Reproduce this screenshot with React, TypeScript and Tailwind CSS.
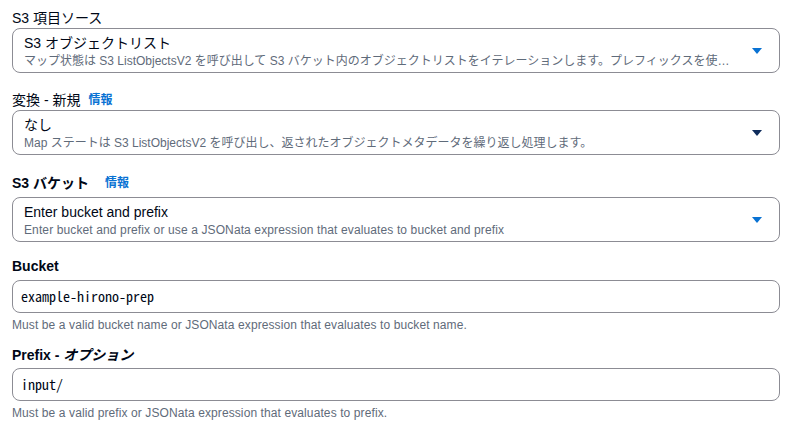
import React from 'react';

const FONT = "font-['Liberation_Sans','Noto_Sans_CJK_JP',sans-serif]";

const Caret = ({ dark }: { dark?: boolean }) => (
  <svg width="12" height="8" viewBox="0 0 12 8" className="shrink-0">
    <path d="M1 1h10L6 7z" fill={dark ? '#0f2c5c' : '#0972d3'} />
  </svg>
);

const InfoLink = () => (
  <span className="text-[12px] font-bold text-[#0972d3]">情報</span>
);

interface SelectProps {
  title: string;
  description: string;
  dark?: boolean;
  latin?: boolean;
}

const SelectBox = ({ title, description, dark, latin }: SelectProps) => (
  <div className="flex h-[45px] items-center rounded-[8px] border border-[#8c8c94] bg-white pr-[16px] pl-[11px]">
    <div className="flex min-w-0 flex-1 flex-col pr-[20px]">
      <span className="text-[14px] leading-[20px] text-[#000716]">{title}</span>
      <span
        className={`truncate text-[12px] leading-[16px] text-[#5f6b7a] ${latin ? 'tracking-[0.12px]' : ''}`}>
        {description}
      </span>
    </div>
    <Caret dark={dark} />
  </div>
);

const TextInput = ({ value }: { value: string }) => (
  <div className="flex h-[33px] items-center rounded-[8px] border border-[#8c8c94] bg-white px-[8px]">
    <span className="font-['Noto_Sans_Mono_CJK_JP','Liberation_Mono',monospace] text-[14px] text-[#000716]">
      {value}
    </span>
  </div>
);

export default function App() {
  return (
    <div className={`${FONT} min-h-[428px] w-[790px] bg-white pt-[8px] pr-[10px] pl-[12px]`}>
      {/* S3 項目ソース */}
      <div className="flex flex-col">
        <label className="text-[14px] leading-[20px] text-[#000716]">S3 項目ソース</label>
        <SelectBox
          title="S3 オブジェクトリスト"
          description="マップ状態は S3 ListObjectsV2 を呼び出して S3 バケット内のオブジェクトリストをイテレーションします。プレフィックスを使用してオブジェクトリストをフィルタリングできます。"
        />
      </div>

      {/* 変換 - 新規 */}
      <div className="mt-[17px] flex flex-col">
        <label className="flex items-center gap-[8px] text-[14px] leading-[20px] text-[#000716]">
          変換 - 新規 <InfoLink />
        </label>
        <SelectBox
          dark
          title="なし"
          description="Map ステートは S3 ListObjectsV2 を呼び出し、返されたオブジェクトメタデータを繰り返し処理します。"
        />
      </div>

      {/* S3 バケット */}
      <div className="mt-[18px] flex flex-col gap-[4px]">
        <label className="flex items-center gap-[16px] text-[14px] leading-[20px] font-bold text-[#000716]">
          S3 バケット <InfoLink />
        </label>
        <SelectBox
          latin
          title="Enter bucket and prefix"
          description="Enter bucket and prefix or use a JSONata expression that evaluates to bucket and prefix"
        />
      </div>

      {/* Bucket */}
      <div className="mt-[14px] flex flex-col gap-[4px]">
        <label className="text-[14px] leading-[20px] font-bold text-[#000716]">Bucket</label>
        <TextInput value="example-hirono-prep" />
        <span className="text-[12px] leading-[16px] tracking-[0.1px] text-[#5f6b7a]">
          Must be a valid bucket name or JSONata expression that evaluates to bucket name.
        </span>
      </div>

      {/* Prefix */}
      <div className="mt-[12px] flex flex-col gap-[3px]">
        <label className="text-[14px] leading-[20px] font-bold text-[#000716]">
          Prefix - <i>オプション</i>
        </label>
        <TextInput value="input/" />
        <span className="mt-[1px] text-[12px] leading-[16px] tracking-[0.1px] text-[#5f6b7a]">
          Must be a valid prefix or JSONata expression that evaluates to prefix.
        </span>
      </div>
    </div>
  );
}
